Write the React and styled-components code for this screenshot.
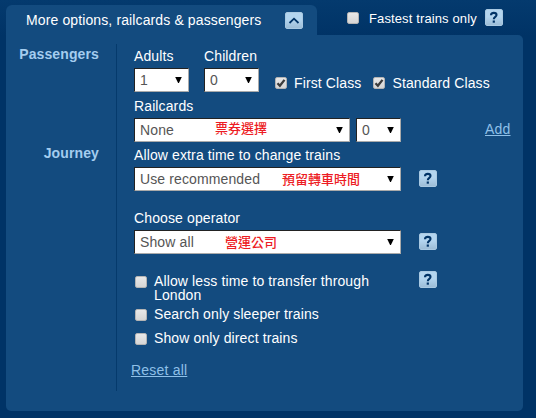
import React from "react";
import styled, { createGlobalStyle } from "styled-components";

const GlobalStyle = createGlobalStyle`
    * {
        box-sizing: border-box;
    }
    body {
        background: #003366;
        color: #fff;
        font-family: "Liberation Sans", "Noto Sans CJK TC", sans-serif;
        font-size: 14px;
        letter-spacing: 0.12px;
        line-height: 16px;
        margin: 0;
    }
`

const Page = styled.main`
    background: linear-gradient(to bottom, #043a6e 0, #003366 36px);
    height: 418px;
    overflow: hidden;
    padding: 5px 13px 0 6px;
    width: 536px;
`
const TopBar = styled.header`
    display: flex;
    height: 30px;
`
const Tab = styled.div`
    background: #134b7f;
    border-radius: 6px 6px 0 0;
    display: flex;
    justify-content: space-between;
    padding: 7px 14px 0 20px;
    width: 311px;
`
const Fastest = styled.div`
    display: flex;
    font-size: 13px;
    padding: 4px 0 0 30px;
`
const Panel = styled.section`
    background: #134b7f;
    border-radius: 0 5px 5px 5px;
    display: flex;
    height: 376px;
    padding-top: 9px;
`
const Side = styled.div`
    border-right: 1px solid #053a6c;
    color: #a4cdef;
    font-weight: bold;
    height: 347px;
    padding: 2px 17px 0 0;
    text-align: right;
    width: 111px;
`
const SideTitle = styled.div`
    height: 99px;
`
const Form = styled.div`
    padding: 4px 0 0 17px;
    width: 406px;
`
const Row = styled.div`
    display: flex;
    height: ${({ $height }) => $height}px;
`
const Label = styled.div`
    height: 20px;
    white-space: nowrap;
`
const Text = styled.span`
    margin: ${({ $margin }) => $margin || 0};
    white-space: nowrap;
`
const WrappedText = styled.span`
    line-height: 14px;
    margin: 3px 0 0;
    width: 265px;
    padding-right: 40px;
`
const Column = styled.div`
    width: 70px;
`
const SelectBox = styled.div`
    align-items: center;
    background: #fff;
    border: 1px solid;
    border-color: #222 #aaa #aaa #222;
    color: #555;
    display: flex;
    flex: none;
    height: 24px;
    margin-right: ${({ $gap }) => $gap || 0}px;
    padding: 0 6px 0 5px;
    width: ${({ $width }) => $width}px;
`
const Note = styled.span`
    color: #ed1c24;
    font-family: "Noto Sans CJK TC", sans-serif;
    font-size: 13px;
    font-weight: 500;
    letter-spacing: 0;
    line-height: 16px;
    margin: ${({ $up }) => ($up ? "-4px 0 0" : "0 0 0")} ${({ $gap }) => $gap}px;
    white-space: nowrap;
`
const Arrow = styled.svg`
    display: block;
    height: 6px;
    margin: 0 0 1px auto;
    width: 7px;
`
const Box = styled.span`
    background: linear-gradient(#e8e8e8, #d6d6d6);
    border: 1px solid #b4b4b4;
    border-radius: 2px;
    display: block;
    flex: none;
    height: 12px;
    margin: ${({ $margin }) => $margin || 0};
    width: 12px;
`
const Tick = styled.svg`
    display: block;
    height: 10px;
    width: 10px;
`
const IconButton = styled.span`
    background: linear-gradient(#b3d5ef 45%, #9dbdd7);
    border: 1px solid #a9c9e2;
    border-radius: 2px;
    color: #003366;
    display: block;
    flex: none;
    height: 17px;
    margin: ${({ $margin }) => $margin || 0};
    width: 18px;
`
const Glyph = styled.svg`
    display: block;
    height: 15px;
    width: 16px;
`
const Link = styled.a`
    color: #8fc0e8;
    letter-spacing: 0.2px;
    text-decoration: underline;
    text-underline-offset: 1px;
`

const Checkbox = ({ checked, margin }) => (
    <Box $margin={margin}>
        {checked && (
            <Tick viewBox="0 0 10 10">
                <path d="M1.5 5.2 3.9 7.8 8.5 1.9" fill="none" stroke="#3c3c3c" strokeWidth="2.3"/>
            </Tick>
        )}
    </Box>
)

const Help = ({ margin }) => (
    <IconButton $margin={margin}>
        <Glyph viewBox="0 0 16 15">
            <path d="M5 5.2C5 3.4 6.2 2.9 7.8 2.9S10.5 3.7 10.5 5.1C10.5 6.9 7.8 6.9 7.8 9.2" fill="none" stroke="currentColor" strokeWidth="2.1"/>
            <path d="M6.7 10.5h2.2v2.2H6.7z" fill="currentColor"/>
        </Glyph>
    </IconButton>
)

const Select = ({ value, width, gap, children }) => (
    <SelectBox $width={width} $gap={gap}>
        <span>{value}</span>
        {children}
        <Arrow viewBox="0 0 7 6">
            <path d="M0.2 0h6.6L3.9 6h-.8z" fill="#000"/>
        </Arrow>
    </SelectBox>
)

const App = () => {
    return(
        <>
            <GlobalStyle/>
            <Page>
                <TopBar>
                    <Tab>
                        <Text>More options, railcards &amp; passengers</Text>
                        <IconButton>
                            <Glyph viewBox="0 0 16 15">
                                <path d="M3.5 10 8 5.7l4.5 4.3" fill="none" stroke="currentColor" strokeWidth="1.8"/>
                            </Glyph>
                        </IconButton>
                    </Tab>
                    <Fastest>
                        <Checkbox margin="3px 10px 0 0"/>
                        <Text $margin="2px 8px 0 0">Fastest trains only</Text>
                        <Help/>
                    </Fastest>
                </TopBar>

                <Panel>
                    <Side>
                        <SideTitle>Passengers</SideTitle>
                        <SideTitle>Journey</SideTitle>
                    </Side>

                    <Form>
                        <Row $height={50}>
                            <Column>
                                <Label>Adults</Label>
                                <Select value="1" width={55}/>
                            </Column>
                            <Column>
                                <Label>Children</Label>
                                <Select value="0" width={55}/>
                            </Column>
                            <Checkbox checked margin="29px 7px 0 1px"/>
                            <Text $margin="27px 12px 0 0">First Class</Text>
                            <Checkbox checked margin="29px 7px 0 0"/>
                            <Text $margin="27px 0 0 0">Standard Class</Text>
                        </Row>

                        <Label>Railcards</Label>
                        <Row $height={29}>
                            <Select value="None" width={216} gap={6}>
                                <Note $gap={41} $up>票券選擇</Note>
                            </Select>
                            <Select value="0" width={45} gap={84}/>
                            <Text $margin="3px 0 0 0"><Link>Add</Link></Text>
                        </Row>

                        <Label>Allow extra time to change trains</Label>
                        <Row $height={43}>
                            <Select value="Use recommended" width={267} gap={18}>
                                <Note $gap={22}>預留轉車時間</Note>
                            </Select>
                            <Help margin="3px 0 0 0"/>
                        </Row>

                        <Label>Choose operator</Label>
                        <Row $height={41}>
                            <Select value="Show all" width={267} gap={18}>
                                <Note $gap={31}>營運公司</Note>
                            </Select>
                            <Help margin="3px 0 0 0"/>
                        </Row>

                        <Row $height={35}>
                            <Checkbox margin="5px 7px 0 1px"/>
                            <WrappedText>Allow less time to transfer through London</WrappedText>
                            <Help/>
                        </Row>
                        <Row $height={24}>
                            <Checkbox margin="3px 7px 0 1px"/>
                            <Text>Search only sleeper trains</Text>
                        </Row>
                        <Row $height={32}>
                            <Checkbox margin="3px 7px 0 1px"/>
                            <Text>Show only direct trains</Text>
                        </Row>
                        <Text $margin="0 0 0 -3px"><Link>Reset all</Link></Text>
                    </Form>
                </Panel>
            </Page>
        </>
    )
}

export default App;
